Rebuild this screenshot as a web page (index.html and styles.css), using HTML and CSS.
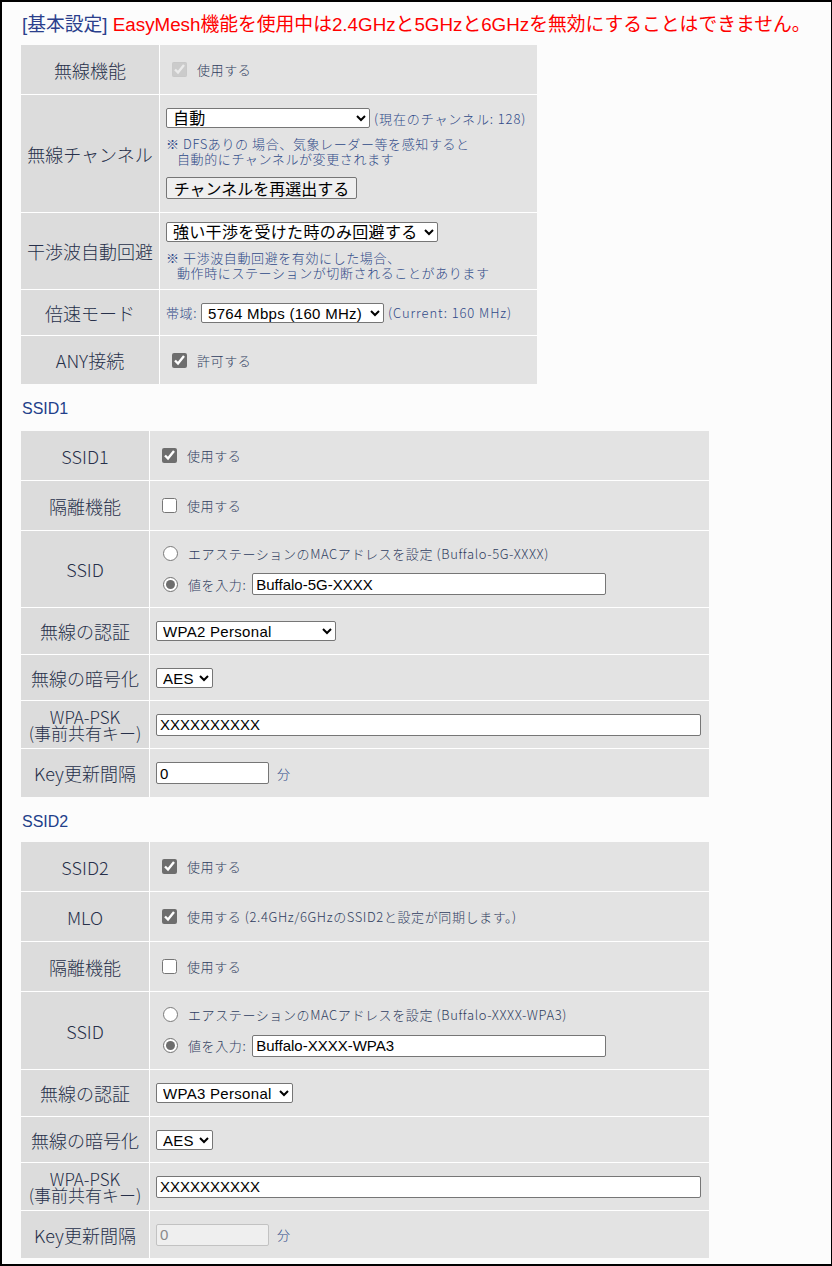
FILE: index.html
```html
<!DOCTYPE html>
<html lang="ja">
<head>
<meta charset="utf-8">
<title>基本設定</title>
<link rel="stylesheet" href="styles.css">
</head>
<body>
<div class="page">
  <h1 class="title"><span class="sec">[基本設定]</span> <span class="warn">EasyMesh機能を使用中は2.4GHzと5GHzと6GHzを無効にすることはできません。</span></h1>

  <div class="form t1">
    <div class="lbl">無線機能</div>
    <div class="val"><label class="line"><input type="checkbox" class="chk" checked disabled>使用する</label></div>

    <div class="lbl">無線チャンネル</div>
    <div class="val">
      <div class="line"><select class="sel s-ch"><option>自動</option></select><span class="after">(現在のチャンネル: 128)</span></div>
      <div class="hint hint-ch"><span class="hl">※ DFSありの 場合、気象レーダー等を感知すると</span><span class="hl ind">自動的にチャンネルが変更されます</span></div>
      <button class="btn" type="button">チャンネルを再選出する</button>
    </div>

    <div class="lbl">干渉波自動回避</div>
    <div class="val">
      <select class="sel s-if"><option>強い干渉を受けた時のみ回避する</option></select>
      <div class="hint hint-if"><span class="hl">※ 干渉波自動回避を有効にした場合、</span><span class="hl ind">動作時にステーションが切断されることがあります</span></div>
    </div>

    <div class="lbl">倍速モード</div>
    <div class="val"><div class="line"><span class="pre">帯域:</span><select class="sel s-bw"><option>5764 Mbps (160 MHz)</option></select><span class="after">(Current: 160 MHz)</span></div></div>

    <div class="lbl">ANY接続</div>
    <div class="val"><label class="line"><input type="checkbox" class="chk" checked>許可する</label></div>
  </div>

  <h2 class="sub sub1">SSID1</h2>

  <div class="form t2">
    <div class="lbl">SSID1</div>
    <div class="val"><label class="line"><input type="checkbox" class="chk" checked>使用する</label></div>

    <div class="lbl">隔離機能</div>
    <div class="val"><label class="line"><input type="checkbox" class="chk">使用する</label></div>

    <div class="lbl">SSID</div>
    <div class="val">
      <label class="line rl"><input type="radio" name="r1" class="rad">エアステーションのMACアドレスを設定 (Buffalo-5G-XXXX)</label>
      <label class="line rl2"><input type="radio" name="r1" class="rad" checked>値を入力:<input type="text" class="txt w-ssid" value="Buffalo-5G-XXXX"></label>
    </div>

    <div class="lbl">無線の認証</div>
    <div class="val"><select class="sel s-wpa2"><option>WPA2 Personal</option></select></div>

    <div class="lbl">無線の暗号化</div>
    <div class="val"><select class="sel s-aes"><option>AES</option></select></div>

    <div class="lbl lbl2">WPA-PSK<br>(事前共有キー)</div>
    <div class="val"><input type="text" class="txt w-psk" value="XXXXXXXXXX"></div>

    <div class="lbl">Key更新間隔</div>
    <div class="val"><div class="line"><input type="text" class="txt w-key" value="0"><span class="unit">分</span></div></div>
  </div>

  <h2 class="sub sub2">SSID2</h2>

  <div class="form t3">
    <div class="lbl">SSID2</div>
    <div class="val"><label class="line"><input type="checkbox" class="chk" checked>使用する</label></div>

    <div class="lbl">MLO</div>
    <div class="val"><label class="line"><input type="checkbox" class="chk" checked>使用する (2.4GHz/6GHzのSSID2と設定が同期します。)</label></div>

    <div class="lbl">隔離機能</div>
    <div class="val"><label class="line"><input type="checkbox" class="chk">使用する</label></div>

    <div class="lbl">SSID</div>
    <div class="val">
      <label class="line rl"><input type="radio" name="r2" class="rad">エアステーションのMACアドレスを設定 (Buffalo-XXXX-WPA3)</label>
      <label class="line rl2"><input type="radio" name="r2" class="rad" checked>値を入力:<input type="text" class="txt w-ssid" value="Buffalo-XXXX-WPA3"></label>
    </div>

    <div class="lbl">無線の認証</div>
    <div class="val"><select class="sel s-wpa3"><option>WPA3 Personal</option></select></div>

    <div class="lbl">無線の暗号化</div>
    <div class="val"><select class="sel s-aes"><option>AES</option></select></div>

    <div class="lbl lbl2">WPA-PSK<br>(事前共有キー)</div>
    <div class="val"><input type="text" class="txt w-psk" value="XXXXXXXXXX"></div>

    <div class="lbl">Key更新間隔</div>
    <div class="val"><div class="line"><input type="text" class="txt w-key" value="0" disabled><span class="unit">分</span></div></div>
  </div>
</div>
</body>
</html>
```

FILE: styles.css
```css
* { box-sizing: border-box; }

body {
  margin: 0;
  background: #fff;
  font-family: "Liberation Sans", "Noto Sans CJK JP", sans-serif;
}

.page {
  width: 832px;
  height: 1266px;
  border: 2px solid #000;
  border-right-width: 1px;
  background: #fcfcfc;
  padding: 11px 0 0 19px;
}

.title {
  margin: 0 0 8px;
  padding-left: 1px;
  font-size: 18.8px;
  font-weight: normal;
  line-height: 24px;
  white-space: nowrap;
}
.sec { color: #2b3f8c; }
.warn { color: #ff0000; }

.sub {
  margin: 15px 0 12px 1px;
  font-size: 16px;
  font-weight: normal;
  line-height: 20px;
  color: #233f8a;
}
.sub2 { margin-bottom: 10px; }

.form {
  display: grid;
  gap: 1px;
  background: #fff;
}
.t1 {
  width: 516px;
  grid-template-columns: 138px 377px;
  grid-template-rows: 49px 117px 76px 45px 48px;
}
.t2 {
  width: 688px;
  grid-template-columns: 128px 559px;
  grid-template-rows: 49px 49px 76px 46px 45px 47px 48px;
}
.t3 {
  width: 688px;
  grid-template-columns: 128px 559px;
  grid-template-rows: 49px 49px 49px 77px 46px 45px 47px 47px;
}

.lbl {
  background: #dcdcdc;
  display: flex;
  align-items: center;
  justify-content: center;
  text-align: center;
  font-family: "Noto Sans CJK JP", sans-serif;
  font-weight: 300;
  font-size: 18px;
  line-height: 18px;
  color: #27304a;
}
.lbl2 {
  font-size: 17px;
  line-height: 16px;
}

.val {
  background: #e3e3e3;
  display: flex;
  flex-direction: column;
  justify-content: center;
  align-items: flex-start;
  padding-left: 6px;
  font-family: "Noto Sans CJK JP", sans-serif;
  font-weight: 300;
  font-size: 13px;
  letter-spacing: 0.6px;
  color: #2f3d60;
}

.line {
  display: flex;
  align-items: center;
  white-space: nowrap;
}

.chk {
  width: 15px;
  height: 15px;
  margin: 0 10px 0 6px;
  accent-color: #6e6e6e;
}
.rad {
  width: 15px;
  height: 15px;
  margin: 0 10px 0 7px;
  accent-color: #6e6e6e;
}

.rl { height: 20px; }
.rl2 { margin-top: 10px; }

.sel {
  height: 20px;
  border: 1px solid #767676;
  border-radius: 2px;
  background: #fff;
  color: #000;
  font-family: "Liberation Sans", "Noto Sans CJK JP", sans-serif;
  font-weight: normal;
  font-size: 15px;
  letter-spacing: 0.3px;
  padding: 0 0 0 2px;
  margin: 0;
}
.s-ch { width: 204px; font-size: 16px; }
.s-if { width: 272px; font-size: 16px; }
.s-bw { width: 183px; }
.s-wpa2 { width: 180px; }
.s-aes { width: 57px; }
.s-wpa3 { width: 137px; }

.after { margin-left: 4px; color: #2f4a88; letter-spacing: 0.9px; }
.pre { margin-right: 4px; color: #2f4a88; }

.hint {
  display: flex;
  flex-direction: column;
  color: #2f4a88;
  line-height: 15px;
}
.hint-ch { margin: 8px 0 11px; }
.hint-if { margin-top: 8px; }
.ind { padding-left: 11px; }

.btn {
  width: 191px;
  height: 22px;
  padding: 0;
  border: 1px solid #767676;
  border-radius: 2px;
  background: #efefef;
  color: #000;
  font-family: "Noto Sans CJK JP", sans-serif;
  font-size: 16px;
  line-height: 20px;
}

.txt {
  height: 22px;
  border: 1px solid #767676;
  border-radius: 2px;
  background: #fff;
  color: #000;
  font-family: "Liberation Sans", "Noto Sans CJK JP", sans-serif;
  font-weight: normal;
  letter-spacing: 0;
  font-size: 15px;
  padding: 0 3px;
  margin: 0;
}
.txt:disabled {
  background: #efefef;
  border-color: #c2c2c2;
  color: #8a8a8a;
}
.w-ssid { width: 354px; margin-left: 6px; }
.w-psk { width: 545px; }
.w-key { width: 113px; }

.unit { margin-left: 8px; color: #2f4a88; }
```
